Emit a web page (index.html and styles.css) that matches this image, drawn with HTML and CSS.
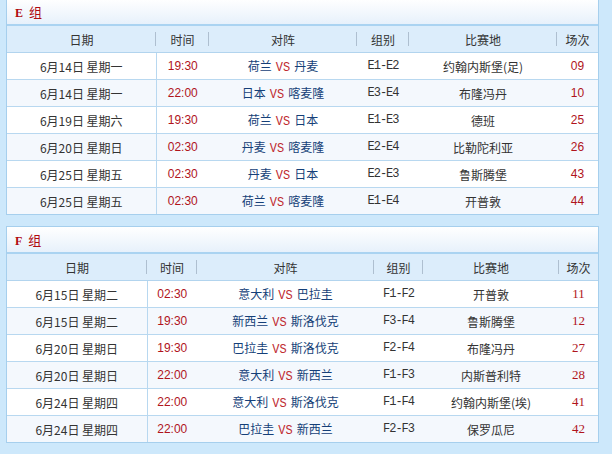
FILE: index.html
```html
<!DOCTYPE html>
<html lang="zh-CN">
<head>
<meta charset="utf-8">
<title>赛程</title>
<link rel="stylesheet" href="styles.css">
</head>
<body>
<div class="page">
  <section class="panel panel-first">
    <div class="band"><span class="band-letter">E</span> 组</div>
    <table class="sched sched-e">
      <colgroup><col class="c1"><col class="c2"><col class="c3"><col class="c4"><col class="c5"><col class="c6"></colgroup>
      <thead>
        <tr><th>日期</th><th>时间</th><th>对阵</th><th>组别</th><th>比赛地</th><th class="last">场次</th></tr>
      </thead>
      <tbody>
        <tr><td class="date">6月14日 星期一</td><td class="time">19:30</td><td class="match"><span class="team">荷兰</span><span class="vs">VS</span><span class="team">丹麦</span></td><td class="code">E1-E2</td><td class="venue">约翰内斯堡(足)</td><td class="num">09</td></tr>
        <tr><td class="date">6月14日 星期一</td><td class="time">22:00</td><td class="match"><span class="team">日本</span><span class="vs">VS</span><span class="team">喀麦隆</span></td><td class="code">E3-E4</td><td class="venue">布隆冯丹</td><td class="num">10</td></tr>
        <tr><td class="date">6月19日 星期六</td><td class="time">19:30</td><td class="match"><span class="team">荷兰</span><span class="vs">VS</span><span class="team">日本</span></td><td class="code">E1-E3</td><td class="venue">德班</td><td class="num">25</td></tr>
        <tr><td class="date">6月20日 星期日</td><td class="time">02:30</td><td class="match"><span class="team">丹麦</span><span class="vs">VS</span><span class="team">喀麦隆</span></td><td class="code">E2-E4</td><td class="venue">比勒陀利亚</td><td class="num">26</td></tr>
        <tr><td class="date">6月25日 星期五</td><td class="time">02:30</td><td class="match"><span class="team">丹麦</span><span class="vs">VS</span><span class="team">日本</span></td><td class="code">E2-E3</td><td class="venue">鲁斯腾堡</td><td class="num">43</td></tr>
        <tr><td class="date">6月25日 星期五</td><td class="time">02:30</td><td class="match"><span class="team">荷兰</span><span class="vs">VS</span><span class="team">喀麦隆</span></td><td class="code">E1-E4</td><td class="venue">开普敦</td><td class="num">44</td></tr>
      </tbody>
    </table>
  </section>

  <section class="panel">
    <div class="band"><span class="band-letter">F</span> 组</div>
    <table class="sched sched-f">
      <colgroup><col class="c1"><col class="c2"><col class="c3"><col class="c4"><col class="c5"><col class="c6"></colgroup>
      <thead>
        <tr><th>日期</th><th>时间</th><th>对阵</th><th>组别</th><th>比赛地</th><th class="last">场次</th></tr>
      </thead>
      <tbody>
        <tr><td class="date">6月15日 星期二</td><td class="time">02:30</td><td class="match"><span class="team">意大利</span><span class="vs">VS</span><span class="team">巴拉圭</span></td><td class="code">F1-F2</td><td class="venue">开普敦</td><td class="num serif">11</td></tr>
        <tr><td class="date">6月15日 星期二</td><td class="time">19:30</td><td class="match"><span class="team">新西兰</span><span class="vs">VS</span><span class="team">斯洛伐克</span></td><td class="code">F3-F4</td><td class="venue">鲁斯腾堡</td><td class="num serif">12</td></tr>
        <tr><td class="date">6月20日 星期日</td><td class="time">19:30</td><td class="match"><span class="team">巴拉圭</span><span class="vs">VS</span><span class="team">斯洛伐克</span></td><td class="code">F2-F4</td><td class="venue">布隆冯丹</td><td class="num serif">27</td></tr>
        <tr><td class="date">6月20日 星期日</td><td class="time">22:00</td><td class="match"><span class="team">意大利</span><span class="vs">VS</span><span class="team">新西兰</span></td><td class="code">F1-F3</td><td class="venue">内斯普利特</td><td class="num serif">28</td></tr>
        <tr><td class="date">6月24日 星期四</td><td class="time">22:00</td><td class="match"><span class="team">意大利</span><span class="vs">VS</span><span class="team">斯洛伐克</span></td><td class="code">F1-F4</td><td class="venue">约翰内斯堡(埃)</td><td class="num serif">41</td></tr>
        <tr><td class="date">6月24日 星期四</td><td class="time">22:00</td><td class="match"><span class="team">巴拉圭</span><span class="vs">VS</span><span class="team">新西兰</span></td><td class="code">F2-F3</td><td class="venue">保罗瓜尼</td><td class="num serif">42</td></tr>
      </tbody>
    </table>
  </section>

  <section class="panel">
    <div class="band"></div>
  </section>
</div>
</body>
</html>
```

FILE: styles.css
```css
html, body {
  margin: 0;
  padding: 0;
}
body {
  background: #cde8fb;
  font-family: "Noto Sans CJK SC", "Liberation Sans", sans-serif;
  font-size: 12px;
  color: #333;
  overflow: hidden;
}
.page {
  width: 593px;
  padding-left: 6px;
  display: flex;
  flex-direction: column;
  gap: 11px;
}
.panel {
  border: 1px solid #a6cfed;
  background: #fff;
}
.panel-first {
  margin-top: -2px;
}
.band {
  height: 25px;
  line-height: 25px;
  padding-left: 8px;
  border-bottom: 2px solid #aad3f1;
  background: linear-gradient(#ffffff, #e7f1fb);
  color: #b00a10;
  font-size: 13px;
}
.band-letter {
  font-family: "Liberation Serif", serif;
  font-weight: bold;
  font-size: 12px;
  margin-right: 3px;
}
.sched {
  width: 591px;
  border-collapse: collapse;
  table-layout: fixed;
}
.sched-e .c1 { width: 149px; }
.sched-e .c2 { width: 53px; }
.sched-e .c3 { width: 148px; }
.sched-e .c4 { width: 52px; }
.sched-e .c5 { width: 148px; }
.sched-e .c6 { width: 41px; }
.sched-f .c1 { width: 140px; }
.sched-f .c2 { width: 50px; }
.sched-f .c3 { width: 177px; }
.sched-f .c4 { width: 49px; }
.sched-f .c5 { width: 136px; }
.sched-f .c6 { width: 39px; }

.sched th {
  height: 26px;
  padding: 0;
  font-weight: normal;
  font-size: 12px;
  color: #333;
  text-align: center;
  background-color: #dcedfb;
  background-image: linear-gradient(#aebfd0, #aebfd0);
  background-size: 1px 14px;
  background-position: right center;
  background-repeat: no-repeat;
  border-bottom: 1px solid #b2d4ee;
}
.sched th.last {
  background-image: none;
}
.sched td {
  height: 26px;
  padding: 0;
  text-align: center;
  white-space: nowrap;
  border-bottom: 1px solid #b8d8f0;
}
.sched tbody tr:last-child td {
  border-bottom: none;
}
.sched tbody tr:nth-child(even) td {
  background: #f4f8fd;
}
.sched td.date {
  border-right: 1px solid #b8d8f0;
  color: #333;
}
.sched td.time {
  font-family: "Liberation Sans", sans-serif;
  color: #b0141c;
}
.team {
  color: #153f78;
}
.vs {
  font-family: "Liberation Mono", monospace;
  font-size: 12px;
  color: #c02a30;
  margin: 0 4px;
}
.sched td.code {
  font-family: "Liberation Mono", monospace;
  font-size: 12px;
  letter-spacing: -1px;
  color: #333;
}
.sched td.venue {
  color: #333;
}
.sched td.num {
  font-family: "Liberation Sans", sans-serif;
  color: #b0141c;
}
.sched td.num.serif {
  font-family: "Liberation Serif", serif;
  font-size: 13px;
}
```
